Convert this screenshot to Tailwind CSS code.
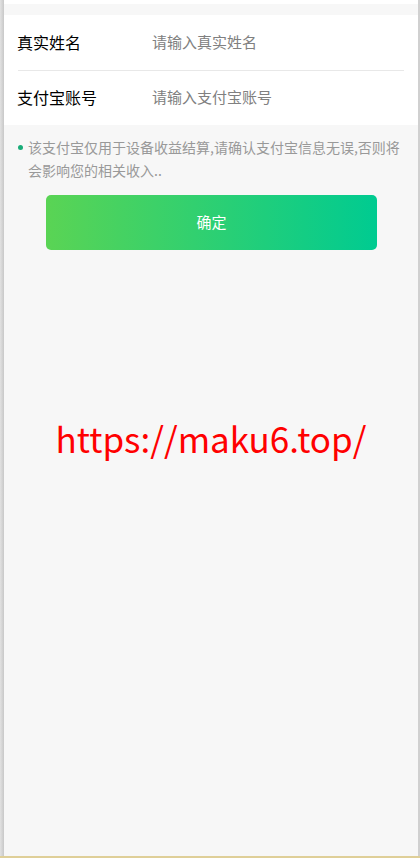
<!DOCTYPE html>
<html lang="zh-CN">

<head>
    <meta charset="UTF-8">
    <meta name="viewport" content="width=device-width, initial-scale=1.0">
    <script src="https://cdn.jsdelivr.net/npm/@tailwindcss/browser@4"></script>
    <title>支付宝账号</title>
</head>

<body class="flex min-h-screen flex-col bg-[#f7f7f7] font-['Noto_Sans_CJK_SC',sans-serif]">
    <div class="flex grow border-b-2 border-[#dfcf98]">
        <div class="w-1 shrink-0 bg-linear-to-r from-[#e2e2e2] to-[#c8c8c8]"></div>
        <main class="min-w-0 grow">
            <div class="h-1 bg-white"></div>
            <form id="account_form">
                <div class="mt-[11px] bg-white px-[14px]">
                    <div class="flex h-14 items-center border-b border-[#e8e8e8]">
                        <label for="real_name" class="-ml-px w-[135px] shrink-0 pb-0.5 text-base text-black">真实姓名</label>
                        <input type="text" id="real_name" name="real_name" placeholder="请输入真实姓名"
                            class="min-w-0 grow text-[15px] outline-none placeholder:text-[#808080]">
                    </div>
                    <div class="flex h-[54px] items-center pb-0.5">
                        <label for="alipay" class="-ml-px w-[135px] shrink-0 text-base text-black">支付宝账号</label>
                        <input type="text" id="alipay" name="alipay" placeholder="请输入支付宝账号"
                            class="min-w-0 grow text-[15px] outline-none placeholder:text-[#808080]">
                    </div>
                </div>
                <div class="flex gap-[5px] pt-[11px] pr-2 pl-[14px]">
                    <span class="mt-[9px] size-[5px] shrink-0 rounded-full bg-[#19ac78]"></span>
                    <p class="text-sm leading-[23px] text-[#999]">该支付宝仅用于设备收益结算,请确认支付宝信息无误,否则将会影响您的相关收入..</p>
                </div>
                <div class="pt-[13px] pr-[41px] pl-[42px]">
                    <button type="submit" class="block h-[55px] w-full rounded-[5px] bg-linear-to-r/srgb from-[#5ad454] to-[#00cb91] text-[15px] text-white">确定</button>
                </div>
            </form>
            <!-- site address -->
            <p class="mt-40 text-center text-[35px] leading-[56px] text-[#ff0000]">https://maku6.top/</p>
        </main>
        <div class="w-0.5 shrink-0 bg-[#d0d0d0]"></div>
    </div>
</body>

</html>
